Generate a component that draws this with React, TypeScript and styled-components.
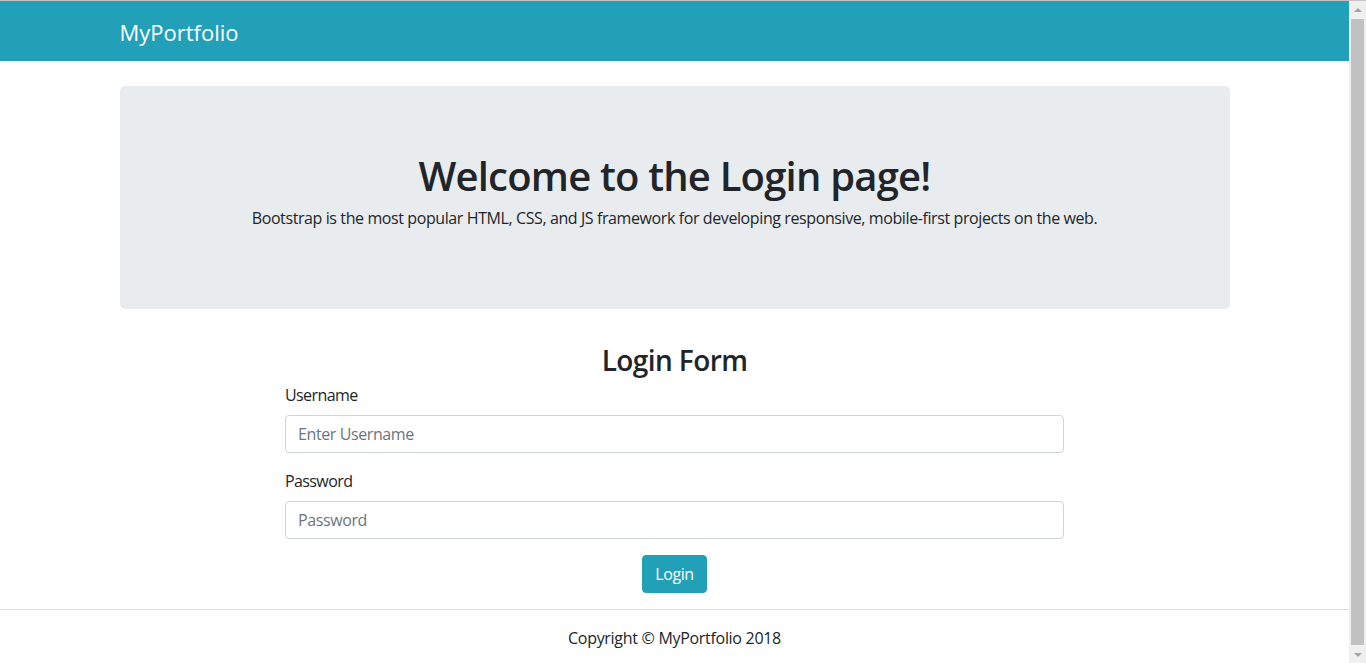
import React from "react";
import styled, { createGlobalStyle } from "styled-components";

const Global = createGlobalStyle`
  html, body { margin: 0; padding: 0; height: 100%; overflow: hidden; }
  body {
    font-family: "Open Sans", "Noto Sans", "Liberation Sans", sans-serif;
    font-size: 16px;
    letter-spacing: -0.4px;
    color: #212529;
    background: #fff;
  }
  * { box-sizing: border-box; }
`;

const Window = styled.div`
  display: flex;
  height: 663px;
  border-top: 1px solid #c4c4c4;
`;

const Page = styled.div`
  flex: 1;
  min-width: 0;
  display: flex;
  flex-direction: column;
`;

const Navbar = styled.nav`
  height: 60px;
  background: #21a0b7;
  display: flex;
  align-items: center;
  margin-bottom: 1px;
`;

const Container = styled.div<{ $narrow?: boolean }>`
  width: ${(p) => (p.$narrow ? "779px" : "1110px")};
  margin: 0 auto;
`;

const Brand = styled.a`
  color: #fff;
  font-size: 22px;
  line-height: 30px;
  letter-spacing: 0;
  text-decoration: none;
  display: block;
  margin-top: 2px;
`;

const Jumbotron = styled.section`
  margin-top: 24px;
  height: 223px;
  background: #e9ecef;
  border-radius: 5px;
  display: flex;
  flex-direction: column;
  align-items: center;
  justify-content: center;
  text-align: center;
`;

const Title = styled.h1`
  margin: 0 0 6px;
  font-size: 40px;
  font-weight: 600;
  line-height: 48px;
  letter-spacing: -0.8px;
`;

const Lead = styled.p`
  margin: 0 0 14px;
  font-size: 16px;
  line-height: 24px;
`;

const FormTitle = styled.h2`
  margin: 33px 0 5px;
  font-size: 28px;
  font-weight: 600;
  line-height: 36px;
  letter-spacing: -0.6px;
  text-align: center;
`;

const Form = styled.form`
  display: flex;
  flex-direction: column;
`;

const Group = styled.div`
  margin-bottom: 16px;
  display: flex;
  flex-direction: column;
`;

const Label = styled.label`
  font-size: 16px;
  line-height: 24px;
  margin-bottom: 8px;
  letter-spacing: -0.6px;
`;

const Input = styled.input`
  height: 38px;
  padding: 6px 12px;
  font-family: inherit;
  font-size: 16px;
  letter-spacing: -0.4px;
  color: #495057;
  border: 1px solid #ced4da;
  border-radius: 4px;
  outline: none;
  &::placeholder { color: #6c757d; }
`;

const Button = styled.button`
  align-self: center;
  height: 38px;
  width: 65px;
  padding: 0;
  font-family: inherit;
  font-size: 16px;
  letter-spacing: -0.4px;
  color: #fff;
  background: #21a0b7;
  border: 1px solid #21a0b7;
  border-radius: 4px;
`;

const Footer = styled.footer`
  margin-top: 16px;
  border-top: 1px solid #dee2e6;
  padding-top: 16px;
  text-align: center;
  line-height: 24px;
  letter-spacing: -0.3px;
`;

const Scrollbar = styled.div`
  width: 17px;
  background: #f0f0f0;
  display: flex;
  flex-direction: column;
  align-items: center;
`;

const Arrow = styled.div<{ $down?: boolean }>`
  height: 17px;
  width: 17px;
  display: flex;
  align-items: center;
  justify-content: center;
  &::after {
    content: "";
    border-left: 4px solid transparent;
    border-right: 4px solid transparent;
    ${(p) => (p.$down ? "border-top: 4px solid #a3a3a3;" : "border-bottom: 4px solid #a3a3a3;")}
  }
`;

const Thumb = styled.div`
  flex: 1;
  width: 13px;
  margin: 1px 0 1px;
  background: #c1c1c1;
`;

export default function App() {
  return (
    <>
      <Global />
      <Window>
        <Page>
          <Navbar>
            <Container>
              <Brand href="#">MyPortfolio</Brand>
            </Container>
          </Navbar>
          <Container>
            <Jumbotron>
              <Title>Welcome to the Login page!</Title>
              <Lead>
                Bootstrap is the most popular HTML, CSS, and JS framework for developing responsive, mobile-first projects on the web.
              </Lead>
            </Jumbotron>
          </Container>
          <Container $narrow>
            <FormTitle>Login Form</FormTitle>
            <Form onSubmit={(e) => e.preventDefault()}>
              <Group>
                <Label htmlFor="username">Username</Label>
                <Input id="username" placeholder="Enter Username" />
              </Group>
              <Group>
                <Label htmlFor="password">Password</Label>
                <Input id="password" type="password" placeholder="Password" />
              </Group>
              <Button type="submit">Login</Button>
            </Form>
          </Container>
          <Footer>Copyright © MyPortfolio 2018</Footer>
        </Page>
        <Scrollbar>
          <Arrow />
          <Thumb />
          <Arrow $down />
        </Scrollbar>
      </Window>
    </>
  );
}
